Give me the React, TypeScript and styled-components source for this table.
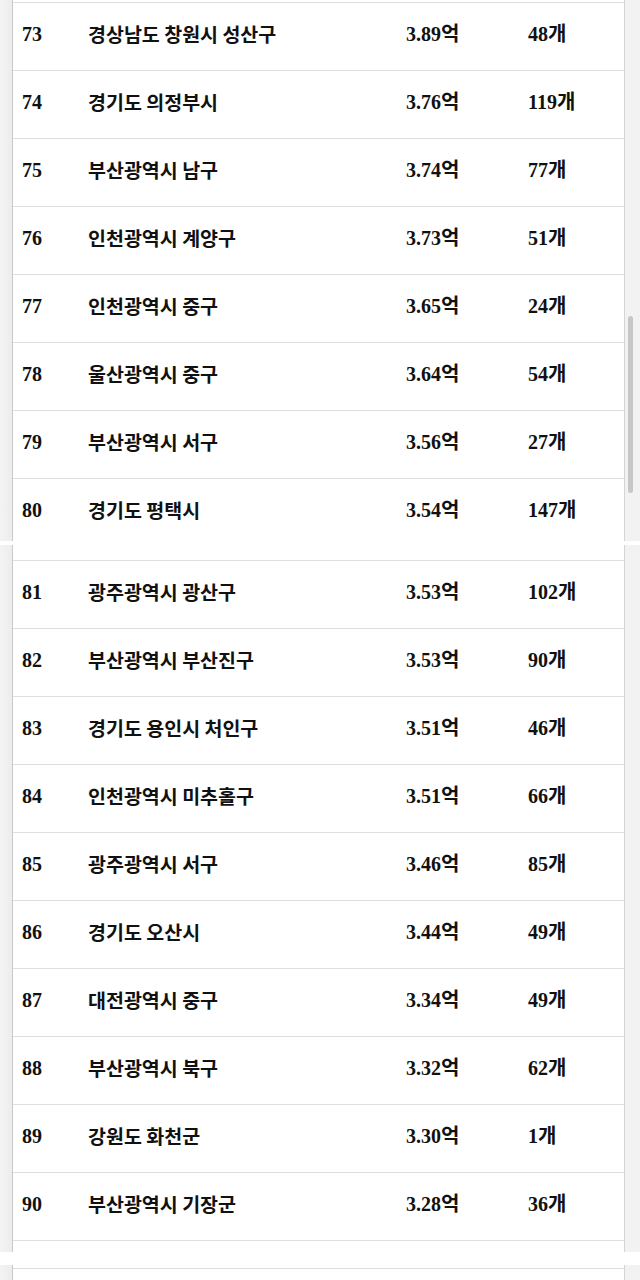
import styled, { createGlobalStyle } from 'styled-components';

type Item = { rank: number; name: string; price: string; count: string };

const firstShot: Item[] = [
  { rank: 73, name: '경상남도 창원시 성산구', price: '3.89억', count: '48개' },
  { rank: 74, name: '경기도 의정부시', price: '3.76억', count: '119개' },
  { rank: 75, name: '부산광역시 남구', price: '3.74억', count: '77개' },
  { rank: 76, name: '인천광역시 계양구', price: '3.73억', count: '51개' },
  { rank: 77, name: '인천광역시 중구', price: '3.65억', count: '24개' },
  { rank: 78, name: '울산광역시 중구', price: '3.64억', count: '54개' },
  { rank: 79, name: '부산광역시 서구', price: '3.56억', count: '27개' },
  { rank: 80, name: '경기도 평택시', price: '3.54억', count: '147개' },
];

const secondShot: Item[] = [
  { rank: 81, name: '광주광역시 광산구', price: '3.53억', count: '102개' },
  { rank: 82, name: '부산광역시 부산진구', price: '3.53억', count: '90개' },
  { rank: 83, name: '경기도 용인시 처인구', price: '3.51억', count: '46개' },
  { rank: 84, name: '인천광역시 미추홀구', price: '3.51억', count: '66개' },
  { rank: 85, name: '광주광역시 서구', price: '3.46억', count: '85개' },
  { rank: 86, name: '경기도 오산시', price: '3.44억', count: '49개' },
  { rank: 87, name: '대전광역시 중구', price: '3.34억', count: '49개' },
  { rank: 88, name: '부산광역시 북구', price: '3.32억', count: '62개' },
  { rank: 89, name: '강원도 화천군', price: '3.30억', count: '1개' },
  { rank: 90, name: '부산광역시 기장군', price: '3.28억', count: '36개' },
];

const GlobalStyle = createGlobalStyle`
  html, body {
    margin: 0;
    padding: 0;
    background: #ffffff;
  }
  body {
    font-family: "Noto Sans CJK KR", sans-serif;
    color: #111111;
  }
`;

const Page = styled.main`
  display: flex;
  flex-direction: column;
  width: 640px;
  height: 1280px;
  overflow: hidden;
`;

const Shot = styled.section<{ $height: number; $gapAfter?: number }>`
  display: grid;
  grid-template-columns: 13px 1fr 16px;
  height: ${(p) => p.$height}px;
  margin-bottom: ${(p) => p.$gapAfter ?? 0}px;
  overflow: hidden;
  flex-shrink: 0;
`;

const LeftGutter = styled.div`
  background: linear-gradient(to right, #f4f4f4, #ececec);
  border-right: 1px solid #c9c9c9;
`;

const RightGutter = styled.div<{ $thumbTop?: number }>`
  display: flex;
  flex-direction: column;
  padding-top: ${(p) => p.$thumbTop ?? 0}px;
  background: #f2f2f2;
  border-left: 1px solid #d4d4d4;
`;

const Thumb = styled.div`
  width: 5px;
  height: 177px;
  margin-left: 3px;
  border-radius: 3px;
  background: #c7c7c7;
`;

const Table = styled.div<{ $top: number }>`
  display: flex;
  flex-direction: column;
  padding-top: ${(p) => p.$top}px;
  background: #ffffff;
`;

const Row = styled.div<{ $last?: boolean }>`
  display: grid;
  grid-template-columns: 66px 318px 122px 1fr;
  align-items: center;
  height: 67px;
  padding-left: 9px;
  border-top: 1px solid #dedede;
  border-bottom: ${(p) => (p.$last ? '1px solid #dedede' : 'none')};
  flex-shrink: 0;
`;

const Serif = styled.span`
  font-family: "Liberation Serif", "Noto Sans CJK KR", serif;
  font-weight: 700;
  font-size: 20px;
  line-height: 1;
  margin-top: -5px;
  white-space: nowrap;
`;

const Name = styled.span`
  font-family: "Noto Sans CJK KR", sans-serif;
  font-weight: 700;
  font-size: 19.5px;
  line-height: 1;
  margin-top: -5px;
  white-space: nowrap;
`;

const Rows = ({ items, lastBorder }: { items: Item[]; lastBorder?: boolean }) => (
  <>
    {items.map((it, i) => (
      <Row key={it.rank} $last={lastBorder && i === items.length - 1}>
        <Serif>{it.rank}</Serif>
        <Name>{it.name}</Name>
        <Serif>{it.price}</Serif>
        <Serif>{it.count}</Serif>
      </Row>
    ))}
  </>
);

const App = () => {
  return (
    <>
      <GlobalStyle />
      <Page>
        <Shot $height={541} $gapAfter={4}>
          <LeftGutter />
          <Table $top={2}>
            <Rows items={firstShot} />
          </Table>
          <RightGutter $thumbTop={316}>
            <Thumb />
          </RightGutter>
        </Shot>
        <Shot $height={707} $gapAfter={13}>
          <LeftGutter />
          <Table $top={15}>
            <Rows items={secondShot} lastBorder />
          </Table>
          <RightGutter />
        </Shot>
        <Shot $height={15}>
          <LeftGutter />
          <Table $top={3}>
            <Row />
          </Table>
          <RightGutter />
        </Shot>
      </Page>
    </>
  );
};

export default App;
